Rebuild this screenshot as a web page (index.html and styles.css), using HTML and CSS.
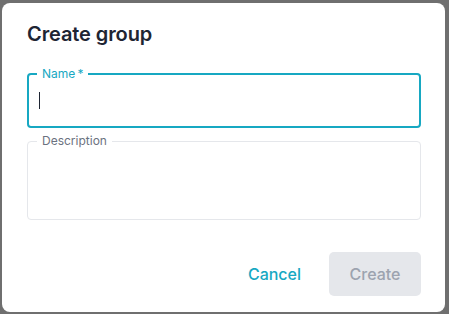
FILE: index.html
```html
<!DOCTYPE html>
<html lang="en">
<head>
  <meta charset="UTF-8">
  <meta name="viewport" content="width=device-width, initial-scale=1.0">
  <title>Create group</title>
  <link rel="stylesheet" href="styles.css">
</head>
<body>
  <div class="backdrop">
    <div class="dialog" role="dialog" aria-labelledby="dialogTitle">
      <h2 id="dialogTitle" class="dialog-title">Create group</h2>

      <div class="dialog-body">
        <fieldset class="field field-focused">
          <legend>Name&thinsp;*</legend>
          <div class="field-input"><span class="caret"></span></div>
        </fieldset>
        <fieldset class="field">
          <legend>Description</legend>
          <div class="field-input field-multiline"></div>
        </fieldset>
      </div>

      <div class="dialog-actions">
        <button type="button" class="btn btn-text">Cancel</button>
        <button type="button" class="btn btn-filled" disabled>Create</button>
      </div>
    </div>
  </div>
</body>
</html>
```

FILE: styles.css
```css
body, html {
  margin: 0;
  padding: 0;
}
body {
  font-family: Inter, "Noto Sans", sans-serif;
  background-color: #6f6f6f;
  color: #1e2533;
}
.backdrop {
  width: 449px;
  height: 314px;
  box-sizing: border-box;
  padding: 3px 4px 2px 2px;
}
.dialog {
  height: 100%;
  box-sizing: border-box;
  background-color: #fff;
  border-radius: 8px;
  padding: 17px 24px 16px 25px;
  display: flex;
  flex-direction: column;
}
.dialog-title {
  margin: 0;
  font-size: 20px;
  line-height: 28px;
  font-weight: 600;
  letter-spacing: -0.1px;
}
.dialog-body {
  margin-top: 19px;
  display: flex;
  flex-direction: column;
  gap: 6px;
}
.field {
  margin: 0;
  padding: 0;
  border: 1px solid #e5e7eb;
  border-radius: 4px;
  min-width: 0;
}
.field legend {
  margin-left: 9px;
  padding: 0 5px;
  font-size: 12px;
  line-height: 14px;
  color: #6b7280;
}
.field-focused {
  border: 2px solid #17a8c2;
}
.field-focused legend {
  margin-left: 8px;
  color: #17a8c2;
}
.field-input {
  height: 45px;
  padding-left: 11px;
  display: flex;
  align-items: center;
}
.field-focused .field-input {
  padding-left: 10px;
}
.field-multiline {
  height: 71px;
}
.caret {
  width: 1px;
  height: 17px;
  margin-top: -7px;
  background-color: #1e2533;
}
.dialog-actions {
  margin-top: auto;
  display: flex;
  justify-content: flex-end;
  gap: 12px;
}
.btn {
  height: 44px;
  padding: 0 16px;
  border: none;
  border-radius: 5px;
  background: none;
  font-family: Inter, "Noto Sans", sans-serif;
  font-size: 16px;
  font-weight: 500;
  cursor: pointer;
}
.btn-text {
  color: #17a8c2;
}
.btn-filled {
  width: 92px;
  background-color: #e5e7eb;
  color: #9ca3af;
}
.btn-filled:disabled {
  cursor: default;
}
```
